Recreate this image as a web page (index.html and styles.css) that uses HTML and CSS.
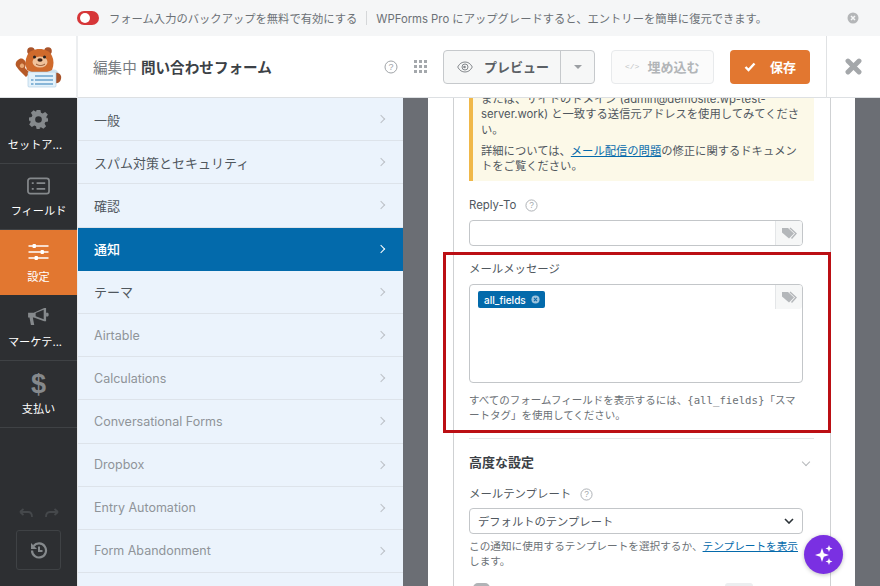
FILE: index.html
```html
<!DOCTYPE html>
<html lang="ja">
<head>
<meta charset="utf-8">
<title>WPForms</title>
<link rel="stylesheet" href="styles.css">
</head>
<body>
<div class="notice">
  <span class="toggle"><i></i></span>
  <span class="notice-text">フォーム入力のバックアップを無料で有効にする</span>
  <span class="notice-sep"></span>
  <span class="notice-text">WPForms Pro にアップグレードすると、エントリーを簡単に復元できます。</span>
  <svg class="notice-close" viewBox="0 0 12 12"><circle cx="6" cy="6" r="5.5" fill="#b4b6b8"/><path d="M4 4l4 4M8 4l-4 4" stroke="#f5f6f7" stroke-width="1.5"/></svg>
</div>
<header class="toolbar">
  <div class="logo-cell">
    <svg class="logo" viewBox="15 48 48 42">
      <path d="M31 72h24c3 0 5 3 5 8v3H31z" fill="#dcecf6" stroke="#a9cbe2" stroke-width=".5"/>
      <path d="M55 75c5-1 8 2 7 6s-4 5-7 4z" fill="#a8532a"/>
      <path d="M20 72l-3-4c-1-2 0-5 2-6 1-1 3-2 5-1s3 3 3 5l-1 4 5 5-4 4z" fill="#b65a28"/>
      <path d="M21 67c1-2 3-2 4 0s-1 3-2 3-3-1-2-3z" fill="#e9a873"/>
      <circle cx="32" cy="53" r="3.800" fill="#a8532a"/><circle cx="49" cy="53" r="3.800" fill="#a8532a"/>
      <path d="M28 72c-2-5-2-10 0-14 2-5 7-7 12.500-7S51 53 53 58c2 4 2 9 0 14-3 2-8 3-12.500 3S31 74 28 72z" fill="#cf6a2c"/>
      <ellipse cx="41" cy="64" rx="7.500" ry="5.500" fill="#f0c19a"/>
      <circle cx="35.500" cy="59" r="1.500" fill="#222"/><circle cx="45.500" cy="59" r="1.500" fill="#222"/>
      <ellipse cx="41" cy="62" rx="2.600" ry="1.700" fill="#3a2014"/>
      <path d="M37 66c3 2 6 2 9 0" stroke="#7a3a18" stroke-width=".8" fill="none"/>
      <path d="M30 74h26c.6 0 1 .4 1 1v13c0 .6-.4 1-1 1H30c-.6 0-1-.4-1-1V75c0-.6.4-1 1-1z" fill="#e3f1fa" stroke="#a9cbe2" stroke-width=".6"/>
      <path d="M36 78h18M36 82h18M36 86h18M32 82h2.500M32 86h2.500" stroke="#2f7cb6" stroke-width="1.200"/>
    </svg>
  </div>
  <h1 class="title"><span class="title-lead">編集中</span> <b>問い合わせフォーム</b></h1>
  <svg class="icon-help" viewBox="0 0 14 14"><circle cx="7" cy="7" r="6" fill="none" stroke="#a0a4a8" stroke-width="1"/><text x="7" y="10" text-anchor="middle" class="qmark">?</text></svg>
  <svg class="icon-grid" viewBox="0 0 13 13"><g fill="#a4a8ac"><rect x="0" y="0" width="3" height="3"/><rect x="5" y="0" width="3" height="3"/><rect x="10" y="0" width="3" height="3"/><rect x="0" y="5" width="3" height="3"/><rect x="5" y="5" width="3" height="3"/><rect x="10" y="5" width="3" height="3"/><rect x="0" y="10" width="3" height="3"/><rect x="5" y="10" width="3" height="3"/><rect x="10" y="10" width="3" height="3"/></g></svg>
  <div class="btn-preview">
    <span class="preview-main">
      <svg class="eye" viewBox="0 0 16 12"><path d="M.7 6C2.500 2.500 5 1 8 1s5.500 1.500 7.300 5C13.500 9.500 11 11 8 11S2.500 9.500.7 6z" fill="none" stroke="#85898d" stroke-width="1"/><circle cx="8" cy="6" r="3" fill="none" stroke="#85898d" stroke-width="1"/><circle cx="7.500" cy="6" r="1.300" fill="#85898d"/></svg>
      プレビュー
    </span>
    <span class="preview-caret"><i></i></span>
  </div>
  <div class="btn-embed"><span class="code">&lt;/&gt;</span>埋め込む</div>
  <div class="btn-save">
    <svg class="check" viewBox="0 0 12 10"><path d="M1.500 5l3 3 6-6.500" fill="none" stroke="#fff" stroke-width="2.400"/></svg>
    保存
  </div>
  <div class="close-cell">
    <svg class="x" viewBox="0 0 16 16"><path d="M2.800 2.800l10.400 10.400M13.200 2.800L2.800 13.200" stroke="#a4a7aa" stroke-width="4.600" stroke-linecap="round"/></svg>
  </div>
</header>
<div class="main">
  <nav class="side">
    <div class="side-item">
      <svg class="side-icon" viewBox="0 0 20 20"><path fill="#85898c" fill-rule="evenodd" d="M8 0h4l.6 2.800 1.800.8L17 2l2.800 2.800-1.600 2.600.8 1.800L20 8v4l-2.800.6-.8 1.800 1.600 2.600-2.800 2.800-2.600-1.600-1.800.8L12 20H8l-.6-2.800-1.800-.8L3 18 .2 15.200l1.600-2.600-.8-1.800L0 12V8l2.800-.6.8-1.800L2 3 4.800.2l2.600 1.600zm2 6.500a3.500 3.500 0 1 0 0 7 3.500 3.500 0 0 0 0-7z"/></svg>
      <span class="trunc">セットア...</span>
    </div>
    <div class="side-item">
      <svg class="side-icon wide" viewBox="0 0 24 18"><rect x="1" y="1" width="22" height="16" rx="2.500" fill="none" stroke="#85898c" stroke-width="1.800"/><path d="M5 6h2M5 12h2M10 6h9M10 12h9" stroke="#85898c" stroke-width="2"/></svg>
      <span>フィールド</span>
    </div>
    <div class="side-item active">
      <svg class="side-icon wide" viewBox="0 0 20 18"><path d="M0 3h20M0 9h20M0 15h20" stroke="#fff" stroke-width="1.400"/><rect x="4" y="1" width="3.500" height="4" rx="1" fill="#fff"/><rect x="12" y="7" width="3.500" height="4" rx="1" fill="#fff"/><rect x="6" y="13" width="3.500" height="4" rx="1" fill="#fff"/></svg>
      <span>設定</span>
    </div>
    <div class="side-item">
      <svg class="side-icon wide" viewBox="0 0 22 19"><path fill="#85898c" d="M0 5h6L17 0h2v14h-2L6 10H5l1.500 8H3L1.500 10H0z"/><path fill="#2d2f32" d="M8 5.300l8.500-3.500v10L8 8.600z"/><path fill="#85898c" d="M19 5h2c1 1 1 3 0 4h-2z"/></svg>
      <span class="trunc">マーケテ...</span>
    </div>
    <div class="side-item pay">
      <span class="dollar">$</span>
      <span>支払い</span>
    </div>
    <div class="side-spacer"></div>
    <div class="undo-row">
      <svg viewBox="0 0 14 10"><path d="M1 4h8c3 0 4 2 4 5M1 4l3.500-3M1 4l3.500 3" fill="none" stroke="#45484b" stroke-width="1.800"/></svg>
      <svg viewBox="0 0 14 10"><path d="M13 4H5C2 4 1 6 1 9M13 4L9.500 1M13 4L9.500 7" fill="none" stroke="#45484b" stroke-width="1.800"/></svg>
    </div>
    <div class="history">
      <svg viewBox="0 0 18 18"><path d="M3.600 5A7 7 0 1 1 2 9.500" fill="none" stroke="#85898c" stroke-width="2.200"/><path d="M1 2v6h6z" fill="#85898c"/><path d="M9 5.500V10h3.500" fill="none" stroke="#85898c" stroke-width="2"/></svg>
    </div>
  </nav>
  <ul class="menu">
    <li>一般<i></i></li>
    <li>スパム対策とセキュリティ<i></i></li>
    <li>確認<i></i></li>
    <li class="current">通知<i></i></li>
    <li>テーマ<i></i></li>
    <li class="muted">Airtable<i></i></li>
    <li class="muted">Calculations<i></i></li>
    <li class="muted">Conversational Forms<i></i></li>
    <li class="muted">Dropbox<i></i></li>
    <li class="muted">Entry Automation<i></i></li>
    <li class="muted">Form Abandonment<i></i></li>
  </ul>
  <div class="stage">
    <section class="sheet">
      <div class="box">
        <div class="warn">
          <p>または、サイトのドメイン (admin@demosite.wp-test-server.work) と一致する送信元アドレスを使用してみてください。</p>
          <p>詳細については、<a>メール配信の問題</a>の修正に関するドキュメントをご覧ください。</p>
        </div>
        <label class="label label-reply">Reply-To <svg class="tip" viewBox="0 0 14 14"><circle cx="7" cy="7" r="6" fill="none" stroke="#a8acb0"/><text x="7" y="10" text-anchor="middle" class="qmark">?</text></svg></label>
        <div class="input"><span class="tagbtn"><svg viewBox="0 0 16 12"><path d="M1 1h6l6 5.500-5 5-7-6z" fill="#b4b7ba"/><path d="M9 1l6 5.500-4.500 5" fill="none" stroke="#b4b7ba" stroke-width="1.400"/></svg></span></div>
        <label class="label label-msg">メールメッセージ</label>
        <div class="textarea">
          <span class="chip">all_fields<svg viewBox="0 0 10 10"><circle cx="5" cy="5" r="4.500" fill="#9cc3dd"/><path d="M3.300 3.300l3.400 3.400M6.700 3.300l-3.400 3.400" stroke="#0f68a6" stroke-width="1.200"/></svg></span>
          <span class="tagbtn tall"><svg viewBox="0 0 16 12"><path d="M1 1h6l6 5.500-5 5-7-6z" fill="#b4b7ba"/><path d="M9 1l6 5.500-4.500 5" fill="none" stroke="#b4b7ba" stroke-width="1.400"/></svg></span>
        </div>
        <p class="hint hint-msg">すべてのフォームフィールドを表示するには、<code>{all_fields}</code>「スマートタグ」を使用してください。</p>
        <hr class="rule">
        <div class="adv"><h2>高度な設定</h2><i></i></div>
        <label class="label label-tpl">メールテンプレート <svg class="tip" viewBox="0 0 14 14"><circle cx="7" cy="7" r="6" fill="none" stroke="#a8acb0"/><text x="7" y="10" text-anchor="middle" class="qmark">?</text></svg></label>
        <div class="select">デフォルトのテンプレート<svg viewBox="0 0 10 6"><path d="M1 1l4 4 4-4" fill="none" stroke="#2c3338" stroke-width="1.600"/></svg></div>
        <p class="hint hint-tpl">この通知に使用するテンプレートを選択するか、<a>テンプレートを表示</a>します。</p>
        <div class="next-row"><span class="next-toggle"></span><span class="next-tag"></span></div>
      </div>
    </section>
    <div class="outline"></div>
    <div class="fab"><svg viewBox="0 0 20 20"><path fill="#fff" d="M8 3l1.800 5.200L15 10l-5.200 1.800L8 17l-1.800-5.200L1 10l5.200-1.800zM15 0l.9 2.600 2.600.9-2.600.9L15 7l-.9-2.600-2.600-.9 2.600-.9zM15 13l.9 2.600 2.600.9-2.600.9L15 20l-.9-2.600-2.600-.9 2.600-.9z"/></svg></div>
  </div>
</div>
</body>
</html>
```

FILE: styles.css
```css
* { box-sizing: border-box; }
html, body { margin: 0; padding: 0; height: 100%; overflow: hidden; }
body {
  width: 880px; height: 586px;
  font-family: "Inter", "Noto Sans CJK JP", sans-serif;
  color: #50575e;
  display: flex; flex-direction: column;
  background: #fff;
}
.notice {
  height: 36px; flex: none;
  background: #f5f6f7;
  display: flex; align-items: center;
  padding-left: 77px;
  font-size: 11.300px; color: #6c7176;
  position: relative;
}
.toggle { width: 22px; height: 14px; border-radius: 7px; background: #d63638; display: block; position: relative; margin-right: 10px; }
.toggle i { position: absolute; left: 3px; top: 2px; width: 10px; height: 10px; border-radius: 50%; background: #fff; }
.notice-sep { width: 1px; height: 14px; background: #d5d7d9; margin: 0 9px; }
.notice-close { position: absolute; left: 847px; top: 12px; width: 12px; height: 12px; }
.toolbar { height: 62px; flex: none; display: flex; align-items: center; border-bottom: 1px solid #dde0e3; background: #fff; }
.logo-cell { width: 78px; height: 62px; border-right: 2px solid #eceef0; display: flex; align-items: center; justify-content: center; flex: none; }
.logo { width: 48px; height: 42px; }
.title { margin: -1px 0 0 15px; font-size: 14.600px; font-weight: 400; color: #777b80; width: 291px; }
.title b { font-weight: 700; color: #3c4146; }
.icon-help { width: 14px; height: 14px; flex: none; }
.qmark { font: 9px "Liberation Sans", sans-serif; fill: #a0a4a8; }
.icon-grid { width: 13px; height: 13px; margin: 0 16px; flex: none; }
.btn-preview { width: 152px; height: 34px; display: flex; border: 1px solid #c6c9cc; border-radius: 4px; background: #f6f7f7; font-size: 13px; font-weight: 700; color: #5b6065; flex: none; }
.preview-main { flex: 1; display: flex; align-items: center; padding-left: 13px; gap: 11px; border-right: 1px solid #c6c9cc; }
.eye { width: 16px; height: 12px; }
.preview-caret { width: 33px; display: flex; align-items: center; justify-content: center; }
.preview-caret i { border: 4px solid transparent; border-top: 4px solid #9b9fa3; border-bottom: 0; }
.btn-embed { width: 103px; height: 34px; margin-left: 16px; display: flex; align-items: center; border: 1px solid #e8eaec; border-radius: 4px; background: #fbfbfb; font-size: 13px; font-weight: 700; color: #b2b5b8; padding-left: 13px; flex: none; }
.code { font: 400 8px "Liberation Mono", monospace; color: #c0c3c5; margin-right: 8px; }
.btn-save { width: 80px; height: 34px; margin-left: 16px; display: flex; align-items: center; justify-content: center; gap: 14px; border-radius: 4px; background: #e27730; color: #fff; font-size: 13px; font-weight: 700; flex: none; }
.check { width: 12px; height: 10px; }
.close-cell { flex: 1; height: 62px; margin-left: 16px; border-left: 1px solid #e0e2e4; display: flex; align-items: center; justify-content: center; }
.x { width: 17px; height: 17px; }
.main { flex: 1; display: flex; min-height: 0; }
.side { width: 77px; flex: none; background: #2d2f32; display: flex; flex-direction: column; color: #fff; font-size: 11.200px; }
.side-item { height: 66px; flex: none; display: flex; flex-direction: column; align-items: center; padding-top: 12px; gap: 7px; border-bottom: 1px solid #3f4245; white-space: nowrap; }
.side-item.active { background: #e27730; height: 65px; border-bottom: 0; }
.side-item.pay { height: 67px; }
.trunc { margin-right: 7px; }
.side-icon { width: 19px; height: 19px; flex: none; }
.side-icon.wide { width: 23px; height: 18px; margin-top: 1px; }
.dollar { font: 700 27px/22px "Liberation Sans", sans-serif; color: #85898c; height: 20px; }
.side-spacer { flex: 1; }
.undo-row { display: flex; justify-content: center; gap: 12px; margin-bottom: 12px; }
.undo-row svg { width: 14px; height: 10px; }
.history { width: 45px; height: 40px; margin: 0 0 16px 16px; border: 1px solid #3f4245; border-radius: 3px; display: flex; align-items: center; justify-content: center; }
.history svg { width: 18px; height: 18px; }
.menu { width: 326px; flex: none; margin: 0; padding: 0; list-style: none; background: #ebf3fc; border-left: 1px solid #e7e9eb; overflow: hidden; }
.menu li { height: 43.200px; padding-left: 16px; display: flex; align-items: center; font-size: 13px; color: #50575e; border-bottom: 1px solid #dde3ea; position: relative; }
.menu li i { position: absolute; right: 19px; top: 18px; width: 6px; height: 6px; border-top: 1px solid #bcc1c7; border-right: 1px solid #bcc1c7; transform: rotate(45deg); }
.menu li.current { background: #036aab; color: #fff; font-weight: 500; border-bottom-color: #036aab; }
.menu li.current i { border-color: #fff; }
.menu li.muted { color: #8f9499; font-size: 12.500px; }
.stage { flex: 1; background: #6b6e74; position: relative; overflow: hidden; padding-left: 25px; min-width: 0; }
.sheet { width: 427px; height: 100%; background: #fff; padding-left: 25px; overflow: hidden; }
.box { width: 378px; height: 600px; border-left: 1px solid #cfd1d3; border-right: 1px solid #cfd1d3; padding: 0 16px 0 15px; margin-top: -6px; }
.warn { width: 345px; height: 89px; background: #fcf9e8; border-left: 4px solid #f0b849; padding: 0 13px 0 8px; font-size: 11.300px; line-height: 15.300px; color: #50575e; }
.warn p { margin: 0 0 6px; }
a { color: #056aab; text-decoration: underline; }
.label { display: flex; align-items: center; gap: 9px; font-size: 11.400px; color: #50575e; line-height: 16px; }
.tip { width: 13px; height: 13px; }
.label-reply { margin-top: 16px; }
.input { width: 334px; height: 26px; margin-top: 7px; border: 1px solid #c3c6c9; border-radius: 4px; position: relative; }
.tagbtn { position: absolute; right: 0; top: 0; width: 27px; height: 24px; background: #f6f7f7; border-left: 1px solid #e4e6e8; display: flex; align-items: center; justify-content: center; border-radius: 0 3px 3px 0; }
.tagbtn svg { width: 16px; height: 12px; }
.label-msg { margin-top: 15px; }
.textarea { width: 334px; height: 99px; margin-top: 7px; border: 1px solid #c3c6c9; border-radius: 4px; position: relative; padding: 6px 8px; display: flex; align-items: flex-start; }
.chip { display: inline-flex; align-items: center; gap: 5px; height: 17px; padding: 0 5px 0 6px; background: #036aab; border-radius: 2px; color: #fff; font-size: 10px; font-weight: 500; }
.chip svg { width: 9px; height: 9px; }
.hint { margin: 0; font-size: 10.500px; line-height: 15px; color: #6c7176; }
.hint-msg { margin-top: 10px; width: 334px; }
code { font: 10.700px "DejaVu Sans Mono", monospace; }
.rule { border: 0; border-top: 1px solid #e4e6e8; margin: 15px 0 0; width: 345px; }
.adv { display: flex; justify-content: space-between; align-items: center; width: 345px; margin-top: 14px; }
.adv h2 { margin: 0; font-size: 13px; font-weight: 700; color: #3c4146; line-height: 18px; }
.adv i { width: 6px; height: 6px; border-right: 1px solid #b5b8bb; border-bottom: 1px solid #b5b8bb; transform: rotate(45deg); margin-right: 5px; }
.label-tpl { margin-top: 15px; }
.select { width: 334px; height: 26px; margin-top: 6px; border: 1px solid #c3c6c9; border-radius: 4px; display: flex; align-items: center; justify-content: space-between; padding: 0 8px; font-size: 11.300px; color: #50575e; }
.select svg { width: 10px; height: 6px; }
.hint-tpl { margin-top: 5px; width: 334px; font-size: 10.650px; }
.next-row { display: flex; margin-top: 14px; padding-left: 4px; }
.next-toggle { width: 17px; height: 10px; border-radius: 5px; background: #b0b3b6; }
.next-tag { width: 28px; height: 10px; border-radius: 3px; background: #eceef0; margin-left: 235px; }
.outline { position: absolute; left: 40px; top: 154px; width: 388px; height: 181px; border: 3px solid #bb0f14; }
.fab { position: absolute; left: 401px; top: 437px; width: 39px; height: 39px; border-radius: 50%; background: #7a30e2; display: flex; align-items: center; justify-content: center; box-shadow: 0 1px 4px rgba(0,0,0,.25); }
.fab svg { width: 20px; height: 20px; }
```
